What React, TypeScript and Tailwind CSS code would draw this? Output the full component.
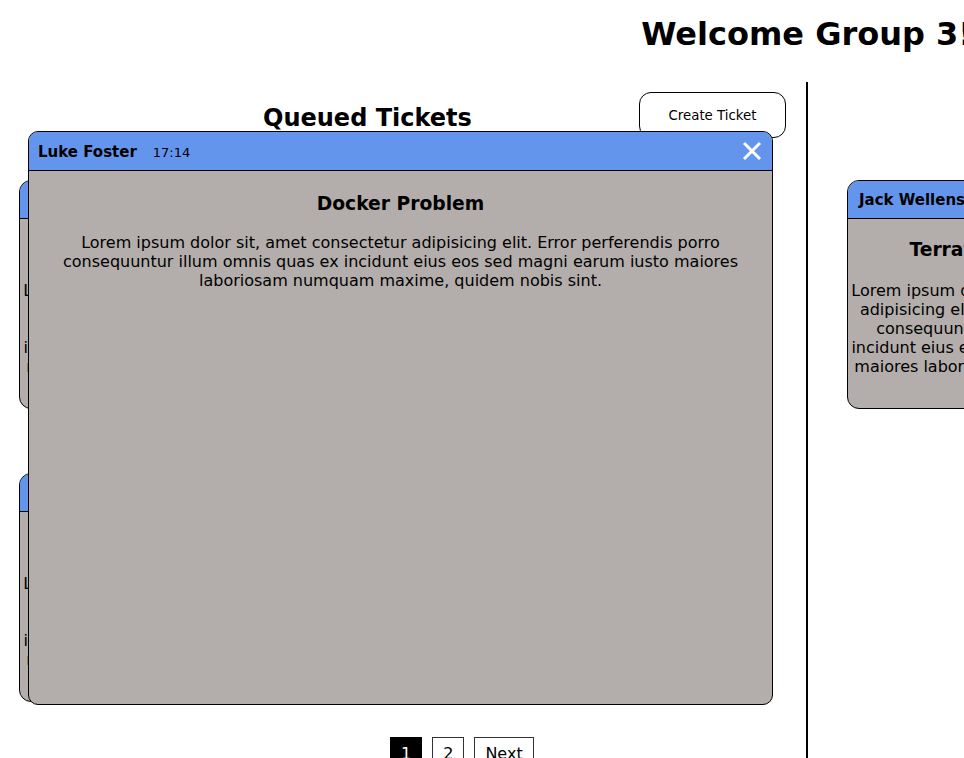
import React from "react";

const LOREM =
  "Lorem ipsum dolor sit, amet consectetur adipisicing elit. Error perferendis porro consequuntur illum omnis quas ex incidunt eius eos sed magni earum iusto maiores laboriosam numquam maxime, quidem nobis sint.";

type Ticket = { name: string; time: string; title: string };

const queued: Ticket[] = [
  { name: "Luke Foster", time: "17:14", title: "Docker Problem" },
  { name: "Emma Clarke", time: "16:52", title: "Network Issue" },
  { name: "Sam Porter", time: "16:30", title: "Login Problem" },
  { name: "Nina Hayes", time: "15:48", title: "Build Failure" },
];

function Card({ t }: { t: Ticket }) {
  return (
    <div className="w-[334px] h-[229px] rounded-[12px] border border-black bg-[#b3aeab] overflow-hidden">
      <div className="h-[38px] bg-[#6495ed] border-b border-black flex items-center px-[11px] whitespace-nowrap">
        <span className="text-[15px] font-bold mt-[2px]">{t.name}</span>
        <span className="text-[13px] ml-[15px] mt-[2px]">{t.time}</span>
      </div>
      <h3 className="mt-[20px] text-[18.72px] leading-[22px] font-bold text-center whitespace-nowrap">
        {t.title}
      </h3>
      <p className="mt-[20px] text-[16px] leading-[19px] text-center line-clamp-5">{LOREM}</p>
    </div>
  );
}

export default function App() {
  return (
    <div
      className="relative w-[1614px] min-h-[758px] bg-white text-black"
      style={{ fontFamily: '"DejaVu Sans", Verdana, sans-serif' }}
    >
      <div className="h-[82px] pt-[16px]">
        <h1 className="text-[32px] leading-[37px] font-bold text-center">Welcome Group 3!</h1>
      </div>
      <div className="flex">
        <div className="w-[808px] min-h-[676px] border-r-2 border-black">
          <div className="flex items-start pt-[10px]">
            <h2 className="ml-[263px] mt-[12px] text-[24px] leading-[28px] font-bold whitespace-nowrap">
              Queued Tickets
            </h2>
            <button className="ml-auto mr-[20px] w-[147px] h-[46px] rounded-[12px] border border-black bg-white text-[13.33px] pt-[1px]">
              Create Ticket
            </button>
          </div>
          <div className="mt-[42px] pl-[19px] grid grid-cols-[334px_334px] gap-x-[65px] gap-y-[64px]">
            {queued.map((t, i) => (
              <Card key={i} t={t} />
            ))}
          </div>
          <div className="mt-[35px] pl-[390px] flex gap-[10px] text-[16px]">
            <button className="h-[31px] px-[10px] pt-[2px] border border-black bg-black text-white">1</button>
            <button className="h-[31px] px-[10px] pt-[2px] border border-[#333] bg-white">2</button>
            <button className="h-[31px] px-[10px] pt-[2px] border border-[#333] bg-white">Next</button>
          </div>
        </div>
        <div className="w-[806px] pt-[98px] pl-[39px]">
          <Card t={{ name: "Jack Wellens", time: "16:05", title: "Terraform Problems" }} />
        </div>
      </div>

      <div className="absolute left-[28px] top-[131px] w-[745px] h-[574px] rounded-[10px] border border-black bg-[#b3aeab] overflow-hidden">
        <div className="h-[39px] bg-[#6495ed] border-b border-black flex items-center pl-[9px] pr-[10px]">
          <span className="text-[15px] font-bold mt-[3px]">Luke Foster</span>
          <span className="text-[13px] ml-[16px] mt-[3px]">17:14</span>
          <svg className="ml-auto" width="20" height="20" viewBox="0 0 20 20">
            <line x1="2" y1="2" x2="18" y2="18" stroke="white" strokeWidth="3" />
            <line x1="18" y1="2" x2="2" y2="18" stroke="white" strokeWidth="3" />
          </svg>
        </div>
        <h3 className="mt-[22px] text-[18.72px] leading-[22px] font-bold text-center">Docker Problem</h3>
        <p className="mt-[18px] px-[14px] text-[16px] leading-[19px] text-center">{LOREM}</p>
      </div>
    </div>
  );
}
